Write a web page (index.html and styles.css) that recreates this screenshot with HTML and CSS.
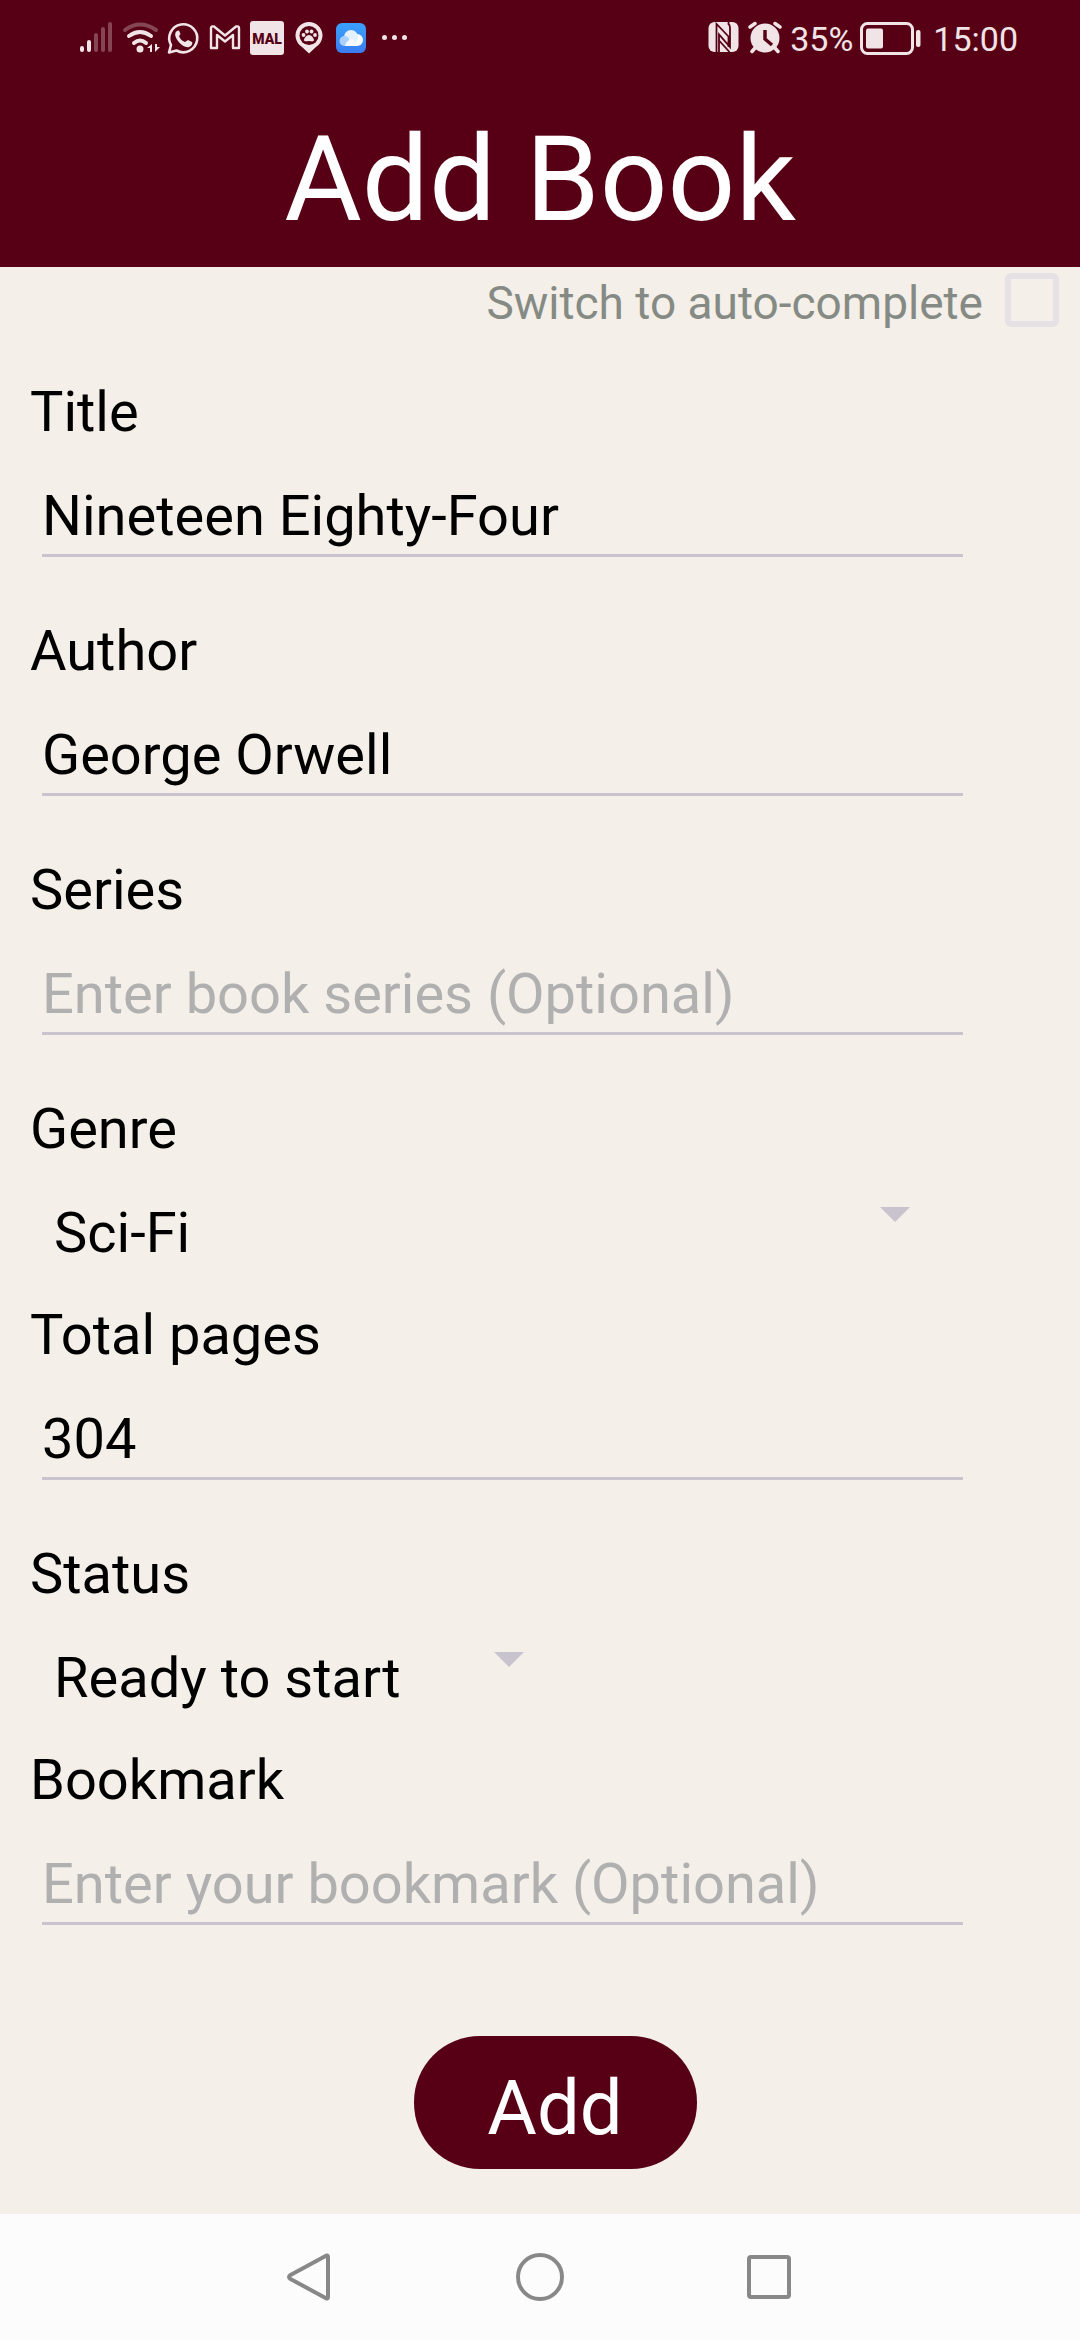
FILE: index.html
```html
<!DOCTYPE html>
<html lang="en">
<head>
<meta charset="utf-8">
<meta name="viewport" content="width=device-width, initial-scale=1">
<title>Add Book</title>
<link rel="stylesheet" href="styles.css">
</head>
<body>
<div class="screen">
  <header class="app-header">
    <div class="status-bar">
      <div class="status-group status-left">
        <svg width="34" height="34" viewBox="79 21 34 34" stroke-width="4" stroke-linecap="round" stroke="currentColor" aria-hidden="true">
          <path d="M82 48v2M89 42v8"/><path d="M96 35v15M103 29v21M110 24v26" opacity=".3"/>
        </svg>
        <svg width="36" height="34" viewBox="122 21 36 34" fill="none" stroke="currentColor" stroke-width="4" stroke-linecap="round" aria-hidden="true">
          <path d="M125 30Q140 19 156 30" opacity=".3"/>
          <path d="M129 36Q140 28 151 36M134 43Q140 38 146 43"/>
          <circle cx="140" cy="49" r="3.5" fill="currentColor" stroke="none"/>
          <path d="M147 48l5-4v8h-2v-4zM160 47l-5 5v-8h2v3z" fill="currentColor" stroke="none"/>
        </svg>
        <svg width="33" height="34" viewBox="167 21 33 34" fill="none" stroke="currentColor" aria-hidden="true">
          <path d="M169 52.500l2-7.500a14 14 0 1 1 5.500 5.500z" stroke-width="2.600" stroke-linejoin="round"/>
          <path d="M177 31c-3 2-2 6 1 10s8 7 11 6 4-4 3-5l-4-2-3 2c-3-1-5-3-6-6l1.500-2-1.500-3.500z" fill="currentColor" stroke="none"/>
        </svg>
        <svg width="32" height="34" viewBox="209 21 32 34" fill="none" stroke="currentColor" stroke-width="2.400" stroke-linejoin="round" aria-hidden="true">
          <path d="M211 48V28q0-2 3-1.500l11 9 11-9q3-.5 3 1.500v20h-6V35l-8 6.500-8-6.500v13z"/>
        </svg>
        <svg width="34" height="34" viewBox="250 21 34 34" aria-hidden="true">
          <rect x="250" y="21" width="34" height="34" rx="3" fill="currentColor"/>
          <text x="267" y="44" class="mal-text" text-anchor="middle">MAL</text>
        </svg>
        <svg width="32" height="34" viewBox="293 21 32 34" fill="currentColor" aria-hidden="true">
          <path d="M309 53.500l-7-6.500a13.500 13.500 0 1 1 14 0z"/>
          <circle cx="309" cy="35.500" r="9.500" class="cut"/>
          <circle cx="303.500" cy="35" r="1.900"/><circle cx="307" cy="31.500" r="1.900"/><circle cx="311.500" cy="31.500" r="1.900"/><circle cx="315" cy="35" r="1.900"/>
          <path d="M309 35c3 0 5 4 5 5 0 2-3 1-5 1s-5 1-5-1c0-1 2-5 5-5z"/>
        </svg>
        <svg width="34" height="34" viewBox="334 21 34 34" aria-hidden="true">
          <defs><linearGradient id="sky" x2="0" y2="1"><stop stop-color="#3ba1fa"/><stop offset="1" stop-color="#3a7df3"/></linearGradient></defs>
          <rect x="336" y="23" width="30" height="30" rx="6" fill="url(#sky)"/>
          <circle cx="357" cy="40" r="6" fill="#fff"/><path d="M345 40h12v6h-12z" fill="#fff"/>
          <circle cx="351" cy="37" r="7" fill="#e3f1ff"/>
          <circle cx="344.500" cy="41" r="5" fill="#a9d0ff"/>
          <path d="M345 46a8 8 0 0 1 8-7l4 7z" fill="#f4f9ff"/>
        </svg>
        <svg width="34" height="34" viewBox="377 21 34 34" fill="currentColor" aria-hidden="true">
          <circle cx="384.500" cy="37.500" r="2.500"/><circle cx="394.500" cy="37.500" r="2.500"/><circle cx="404.500" cy="37.500" r="2.500"/>
        </svg>
      </div>
      <div class="status-group status-right">
        <svg width="32" height="34" viewBox="708 21 32 34" aria-hidden="true">
          <rect x="708.500" y="22" width="30" height="30" rx="6" fill="currentColor"/>
          <path d="M716.500 53V24l12 12.500V47M728.500 21v3q1.500 1 1.500 4v19L719 34.500V53" fill="none" class="cut-line" stroke-width="1.800"/>
          <path d="M719.500 41l10 11" fill="none" class="cut-line" stroke-width="1.800"/>
        </svg>
        <svg width="36" height="34" viewBox="748 21 36 34" fill="currentColor" aria-hidden="true">
          <circle cx="766" cy="38" r="14.500"/>
          <path d="M751 27l5-3.500M781 27l-5-3.500M756 48l-3 3.500M776 48l3 3.500" stroke="currentColor" stroke-width="3.500" stroke-linecap="round"/>
          <path d="M766 30v9l7 6" fill="none" class="cut-line" stroke-width="3.500"/>
        </svg>
        <span class="status-text">35%</span>
        <svg width="62" height="34" viewBox="861 20 62 34" aria-hidden="true">
          <rect x="862.500" y="22.500" width="51" height="30" rx="6" fill="none" stroke="currentColor" stroke-width="3"/>
          <rect x="867" y="27.500" width="17" height="20" rx="2" fill="currentColor"/>
          <rect x="917" y="29" width="4.500" height="17" rx="2" fill="currentColor"/>
        </svg>
        <time class="status-text">15:00</time>
      </div>
    </div>
    <h1 class="title">Add Book</h1>
  </header>

  <main class="content">
    <form class="book-form">
      <div class="mode-row">
        <label for="auto">Switch to auto-complete</label>
        <input class="check" type="checkbox" id="auto">
      </div>
      <div class="fields">
        <label class="label" for="title">Title</label>
        <input class="input" id="title" type="text" value="Nineteen Eighty-Four">
        <label class="label" for="author">Author</label>
        <input class="input" id="author" type="text" value="George Orwell">
        <label class="label" for="series">Series</label>
        <input class="input" id="series" type="text" placeholder="Enter book series (Optional)">
        <label class="label" for="genre">Genre</label>
        <div class="picker picker-wide">
          <select id="genre"><option>Sci-Fi</option></select>
          <svg class="arrow" width="30" height="15" viewBox="0 0 30 15" aria-hidden="true"><path d="M0 0h30L15 15z"/></svg>
        </div>
        <label class="label" for="pages">Total pages</label>
        <input class="input" id="pages" type="text" inputmode="numeric" value="304">
        <label class="label" for="status">Status</label>
        <div class="picker">
          <select id="status"><option>Ready to start</option></select>
          <svg class="arrow" width="30" height="15" viewBox="0 0 30 15" aria-hidden="true"><path d="M0 0h30L15 15z"/></svg>
        </div>
        <label class="label" for="bookmark">Bookmark</label>
        <input class="input" id="bookmark" type="text" placeholder="Enter your bookmark (Optional)">
        <button class="add" type="submit">Add</button>
      </div>
    </form>
  </main>

  <nav class="nav-bar" aria-label="System">
    <button type="button" aria-label="Back"><svg width="48" height="48" viewBox="0 0 48 48"><path d="M40.500 2.500L4.500 22q-3 2 0 4l36 19.500q1.500.5 1.500-2v-39q0-2.500-1.500-2z"/></svg></button>
    <button type="button" aria-label="Home"><svg width="48" height="48" viewBox="0 0 48 48"><circle cx="24" cy="24" r="22"/></svg></button>
    <button type="button" aria-label="Recent apps"><svg width="48" height="48" viewBox="0 0 48 48"><rect x="3" y="4" width="40" height="40" rx="2"/></svg></button>
  </nav>
</div>
</body>
</html>
```
FILE: styles.css
```css
* {
  box-sizing: border-box;
}

body {
  margin: 0;
  background: #f4efe8;
  color: #000;
  font-family: Roboto, "Liberation Sans", sans-serif;
}

input,
select,
button {
  margin: 0;
  padding: 0;
  border: 0;
  border-radius: 0;
  background: none;
  color: inherit;
  font: inherit;
  appearance: none;
}

.screen {
  display: flex;
  flex-direction: column;
  min-height: 100vh;
}

/* Header */
.app-header {
  background: #570015;
  color: #fff;
}

.status-bar {
  display: flex;
  justify-content: space-between;
  align-items: center;
  height: 76px;
  padding: 0 62px 0 79px;
  color: #f0e4e7;
}

.status-group {
  display: flex;
  align-items: center;
}

.status-group svg {
  flex: none;
  overflow: visible;
}

.status-left {
  gap: 9px;
}

.status-right {
  gap: 7px;
}

.status-text {
  padding-top: 2px;
  font-size: 34px;
  line-height: 40px;
}

.status-right time {
  padding-left: 4px;
}

.mal-text {
  fill: #570015;
  font-size: 14px;
  font-weight: 900;
}

.cut {
  fill: #570015;
}

.cut-line {
  stroke: #570015;
}

.title {
  margin: 0;
  padding: 25px 0 8px;
  font-size: 119px;
  font-weight: 400;
  line-height: 158px;
  text-align: center;
}

/* Form */
.content {
  flex: 1;
}

.mode-row {
  display: flex;
  justify-content: flex-end;
  gap: 22px;
  padding: 6px 21px 0;
  color: #858b84;
  font-size: 46px;
  line-height: 60px;
}

.check {
  width: 54px;
  height: 54px;
  border: 6px solid #e6e1e5;
  border-radius: 6px;
}

.fields {
  display: flex;
  flex-direction: column;
  padding: 28px 0 45px 30px;
  font-size: 56px;
}

.label {
  line-height: 103px;
}

.input {
  height: 93px;
  margin: 0 117px 43px 12px;
  padding-top: 13px;
  border-bottom: 3px solid #c9c3ce;
  outline: 0;
}

.input::placeholder {
  color: #b0b0b0;
  opacity: 1;
}

.picker {
  display: grid;
  width: 492px;
  height: 103px;
  margin-left: 24px;
}

.picker-wide {
  width: auto;
  margin-right: 148px;
}

.picker > * {
  grid-area: 1 / 1;
}

.arrow {
  justify-self: end;
  margin: 26px 22px 0 0;
  fill: #c9c3ce;
  pointer-events: none;
}

.add {
  align-self: center;
  width: 283px;
  height: 133px;
  margin-top: 68px;
  padding-top: 10px;
  border-radius: 66px;
  background: #570015;
  color: #fff;
  font-size: 76px;
}

/* System navigation */
.nav-bar {
  display: flex;
  justify-content: center;
  height: 126px;
  background: #fcfcfc;
}

.nav-bar button {
  display: grid;
  place-items: center;
  width: 230px;
}

.nav-bar svg {
  fill: none;
  stroke: #888;
  stroke-width: 4;
  stroke-linejoin: round;
}
```
